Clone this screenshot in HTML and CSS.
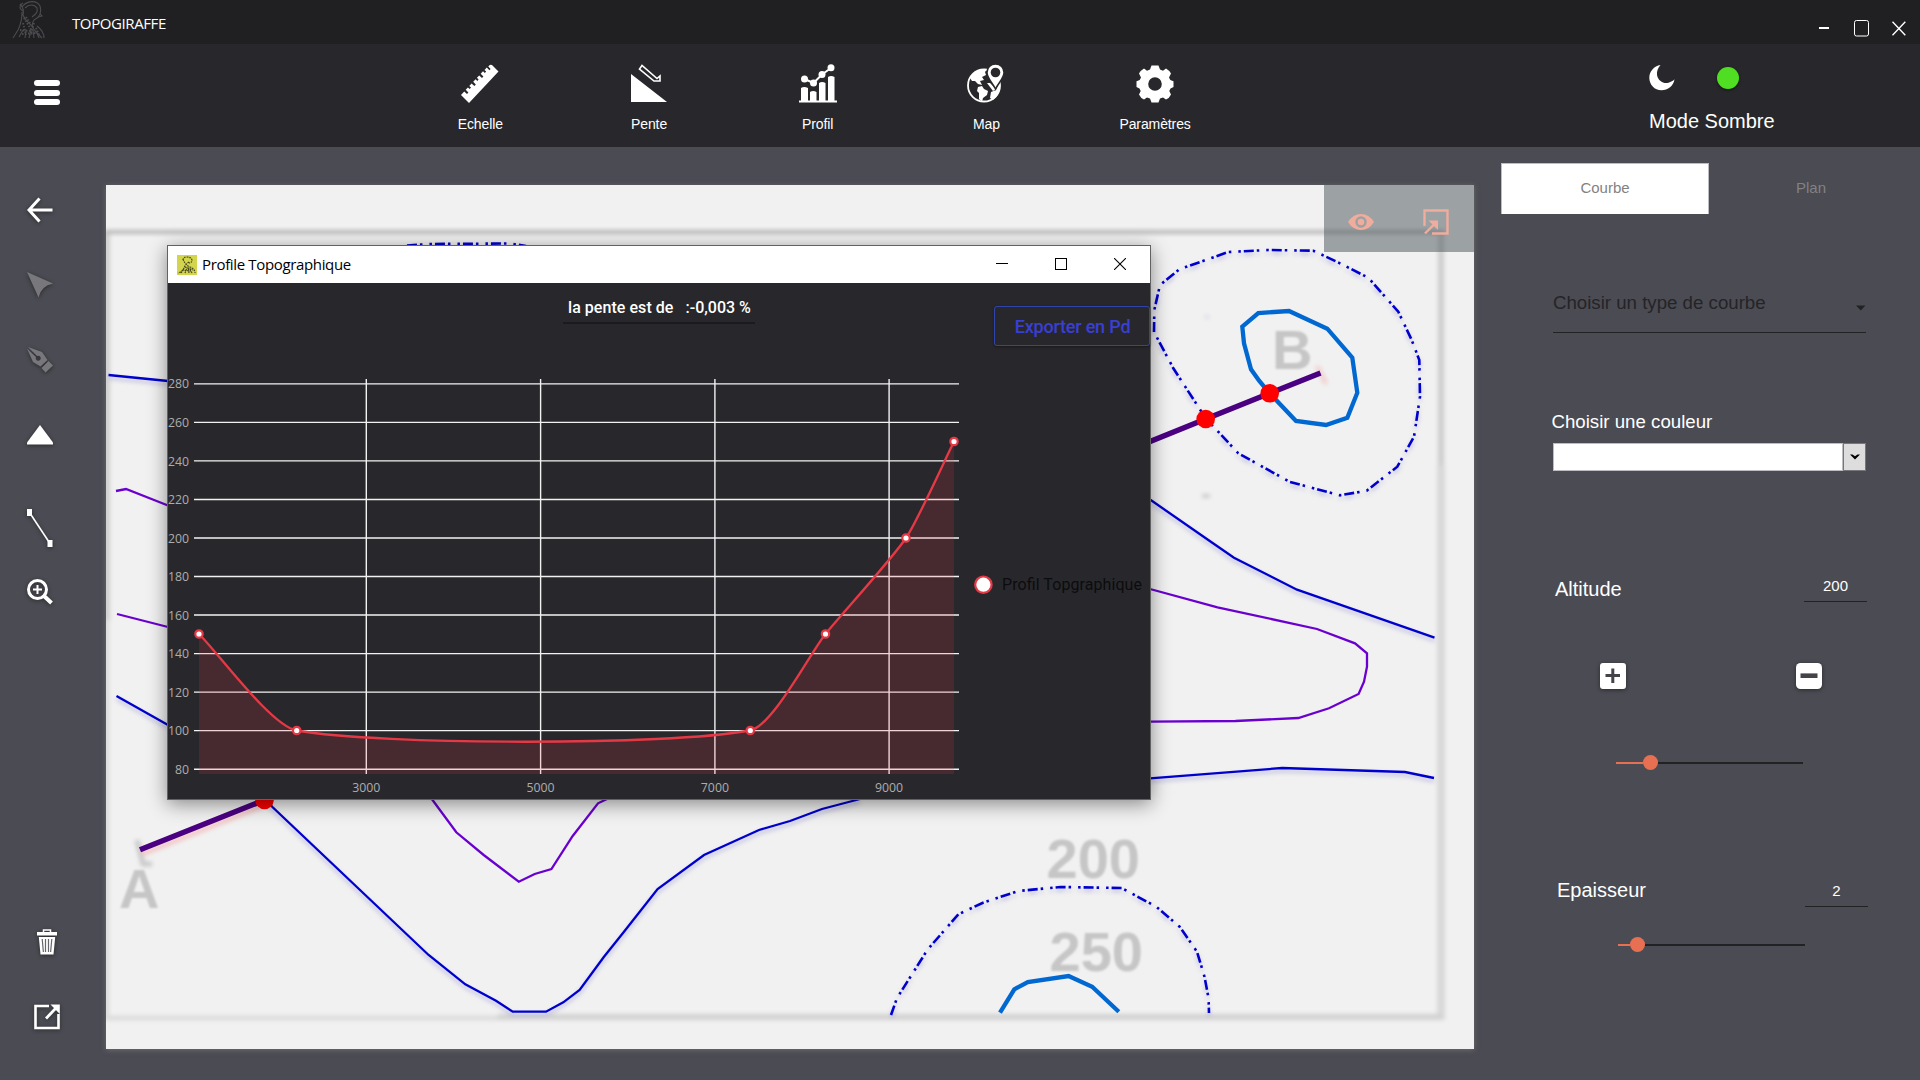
FILE: index.html
```html
<!DOCTYPE html>
<html lang="fr">
<head>
<meta charset="utf-8">
<title>TopoGiraffe</title>
<link rel="stylesheet" href="styles.css">
</head>
<body>
<header class="titlebar">
  <svg class="logo" width="34" height="40" viewBox="0 0 34 40"><g fill="none" stroke="#4c4c50" stroke-width="1.100"><path d="M11 11C7 9 7 5 11 3M10 7C15 0 25 0 28 6C30 12 28 17 22 20C19 24 20 29 25 33L30 38"/><path d="M13 8C17 4 22 4 25 8C26 12 24 14 20 17M28 14l2 2-4 1"/><path d="M8 4c3 3 4 7 3 11c2 7 8 8 10 13M10 12c0 8-1 12-4 18L1 38M25 26c4 3 7 7 7 12"/><path d="M7 37l4-7M13 38l1-8M17 38l2-8M22 38l-1-8M27 38l-3-7" /><path stroke-dasharray="1.5 1.5" d="M12 18l8 13M14 17l5 8M11 23l3 12M8 30l11 1M22 23l-4 12M24 28l3 7M10 34l15-1" stroke-width="2"/></g></svg>
  <span class="app-name">TOPOGIRAFFE</span>
  <div class="controls">
    <svg width="10" height="2"><path d="M0 1H10" stroke="#fff" stroke-width="2"/></svg>
    <svg width="16" height="17"><rect x=".5" y=".5" width="14" height="15.5" rx="2" fill="none" stroke="#fff"/></svg>
    <svg width="14" height="15"><path d="M.5 .8L13.3 14.2M13.3 .8L.5 14.2" stroke="#fff" stroke-width="1.4"/></svg>
  </div>
</header>

<nav class="toolbar">
  <button class="burger"><i></i><i></i><i></i></button>
  <div class="tools">
    <button class="tool"><svg width="40" height="40" viewBox="0 0 40 40"><path fill="#fff" d="M32 1L38.500 7.500L9 39L1 31L4.200 27.400L7 30L8.400 28.500L5.700 25.800L7.900 23.400L9.700 25.100L11 23.600L9.300 21.900L11.600 19.400L14.400 22L15.800 20.500L13.200 17.700L15.600 15.200L17.300 16.900L18.600 15.500L16.900 13.800L19.200 11.400L22 14L23.400 12.500L20.700 9.800L23 7.300L24.800 9L26.200 7.600L24.500 5.900L26.800 3.500L29.400 6.200L30.600 4.900L28.300 2.500L30 .8Z"/></svg><span>Echelle</span></button>
    <button class="tool"><svg width="40" height="40" viewBox="0 0 40 40"><path fill="#fff" d="M2 10V38H38Z"/><path fill="none" stroke="#fff" stroke-width="1.6" d="M13 1.500L10.500 5L25 17H31V12L28 14.500Z"/></svg><span>Pente</span></button>
    <button class="tool"><svg width="40" height="40" viewBox="0 0 40 40"><g fill="#fff"><path d="M1 36.500H39V38.500H1ZM3 24q3-2 7 0V37H3ZM12 28q3-2 6.500 0V37H12ZM21 19q3-2 6.500 0V37H21ZM30 13q3-2 6.500 0V37H30Z"/><circle cx="6.500" cy="15" r="3.500"/><circle cx="15.500" cy="19" r="3.500"/><circle cx="24" cy="10.500" r="3.500"/><circle cx="33" cy="3.800" r="3.500"/></g><path d="M6.500 15L15.500 19L24 10.500L33 4" fill="none" stroke="#fff" stroke-width="2"/></svg><span>Profil</span></button>
    <button class="tool"><svg width="40" height="40" viewBox="0 0 40 40"><circle cx="18" cy="21.500" r="16" fill="none" stroke="#fff" stroke-width="1.800"/><g fill="#fff"><path d="M4 14C8 7 14 4 21 5.500L19 8L20 11L16 13L18 16L14 17L16 21L12 20L9 17L6 17Z"/><path d="M12 23l4-1 2 3 4 2-1 4-4 3-1 4-3-3v-6l-2-2z"/><path d="M24 34l1-6 5-2 3-7 1 2q1 9-7 15z"/><path d="M21 19l3 0 6 6-3 2z"/></g><path fill="#fff" stroke="#28282c" stroke-width="1.500" d="M29.500 0C24.500 0 21 4 21 8.500C21 14 26 18 29.500 25C33 18 38 14 38 8.500C38 4 34.500 0 29.500 0Z"/><circle cx="29.500" cy="8.500" r="4.800" fill="#28282c"/></svg><span>Map</span></button>
    <button class="tool"><svg width="40" height="40" viewBox="0 0 40 40"><path fill="#fff" fill-rule="evenodd" d="M16.500 1.500H23.500L25 5.500L28 6.800L31 4.500Q34.500 6.500 36 9.500L34 13.500L35.300 16L38.500 17.200V23L35.500 24.500L34.300 27L36 30.500Q34.500 34 31 35.500L28 33.500L25 34.600L23.500 38.500H16.500L15 34.600L12 33.500L9 35.500Q5.500 34 4 30.500L5.700 27L4.500 24.500L1.500 23V17.200L4.700 16L6 13.500L4 9.500Q5.500 6.500 9 4.500L12 6.800L15 5.500ZM20 13.200A6.800 6.800 0 1 0 20 26.800A6.800 6.800 0 1 0 20 13.200Z"/></svg><span>Paramètres</span></button>
  </div>
  <div class="mode">
    <div class="mode-icons">
      <svg width="26" height="26" viewBox="0 0 26 26"><path fill="#fff" d="M11.500 0C9 3 7.500 6 8 10C9 15.500 14 19 19.500 17.800C22 17 24 16 25.500 14.300C24.500 21 19 25.300 12.500 25.300C5.500 25.300 .3 19.500 .3 12.700C.3 6.500 5 1 11.500 0Z"/></svg>
      <span class="mode-dot"></span>
    </div>
    <span class="mode-label">Mode Sombre</span>
  </div>
</nav>

<main class="workspace">
  <aside class="side">
    <svg class="ico" width="26" height="26" viewBox="0 0 26 26"><path d="M12.500 1.500L2 13L12.500 24.500M2 13H25.500" fill="none" stroke="#fff" stroke-width="3"/></svg>
    <svg class="ico off" width="26" height="26" viewBox="0 0 26 26"><path fill="#77777c" d="M0 0L26 11.500Q14 14 11.500 25.500Z"/></svg>
    <svg class="ico off" width="26" height="26" viewBox="0 0 26 26"><g fill="#77777c"><path fill-rule="evenodd" d="M1 0L15 5L20.500 13L13.500 19.500L6 15L0 1.500L9 10A2.500 2.500 0 1 0 10 9Z"/><path d="M21.500 14L26 18.500L18.500 25.500L14.500 21Z"/></g></svg>
    <svg class="ico" width="26" height="20" viewBox="0 0 26 20"><path fill="#fff" d="M13 0L26 17.500V19.500H0V17.500Z"/></svg>
    <svg class="ico" width="26" height="38" viewBox="0 0 26 38"><path d="M2.500 3.500L23 34.500" stroke="#fff" stroke-width="1.600"/><path fill="#fff" d="M0 0H5V7H0ZM20.500 31H25.500V38H20.500Z"/></svg>
    <svg class="ico" width="26" height="26" viewBox="0 0 26 26"><g fill="none" stroke="#fff"><circle cx="10.500" cy="10.500" r="9" stroke-width="3"/><path d="M6 10.500H15M10.500 6V15" stroke-width="2"/><path d="M17 17L24.500 24" stroke-width="4"/></g></svg>
    <svg class="ico" width="20" height="26" viewBox="0 0 20 26"><path fill="none" stroke="#fff" stroke-width="1.500" d="M6.500 3V1H13.500V3"/><path fill="#fff" d="M0 3H20V6.500H0ZM1.800 8H18.200L16.500 25.500H3.500Z"/><path stroke="#4b4b52" stroke-width="1.200" d="M5.200 10L6.400 23M8.500 10V23M11.500 10V23M14.800 10L13.600 23" opacity=".85"/></svg>
    <svg class="ico" width="26" height="26" viewBox="0 0 26 26"><path fill="none" stroke="#fff" stroke-width="2.600" d="M15 2H1.500V24H24.500V10"/><path stroke="#fff" stroke-width="2.800" d="M12 14.500L22 4"/><path fill="#fff" d="M16.500 .5H25.800V10Z"/></svg>
  </aside>

  <section class="canvas">
    <svg class="map" width="1368" height="864" viewBox="106 185 1368 864">
      <defs>
        <filter id="soft" x="-20%" y="-20%" width="140%" height="140%"><feGaussianBlur stdDeviation="1.300"/></filter>
        <filter id="halo" x="106" y="185" width="1368" height="864" filterUnits="userSpaceOnUse"><feGaussianBlur stdDeviation="2"/></filter>
      </defs>
      <g filter="url(#halo)" fill="none">
        <path d="M104 232H1445" stroke="#b8b8b8" stroke-width="4"/>
        <path d="M106 234V620" stroke="#cfcfcf" stroke-width="8"/>
        <path d="M106 620V1018" stroke="#dadada" stroke-width="6"/>
        <path d="M1441 232V465" stroke="#cccccc" stroke-width="6"/>
        <path d="M1441 465V1020" stroke="#d8d8d8" stroke-width="8"/>
        <path d="M104 1018H500" stroke="#dadada" stroke-width="4.500"/>
        <path d="M498 1017H1442" stroke="#d2d2d2" stroke-width="6"/>
        <path d="M137 840L143 864L152 864" stroke="#c8c8c8" stroke-width="5"/>
        <path d="M1317 366L1326 384" stroke="#f3d0d0" stroke-width="5"/>
        <path d="M142 854L262 806" stroke="#f3c6c6" stroke-width="5"/>
        <circle cx="1207" cy="317" r="1" stroke="#dcdcea" stroke-width="3"/>
        <path d="M1202 496H1210" stroke="#cccccc" stroke-width="4"/>
        <g stroke="#a9a9dc" stroke-width="3" transform="translate(0 3)" opacity=".65">
          <use href="#dashes"/><use href="#contours"/>
        </g>
      </g>
      <g class="ghost" filter="url(#soft)">
        <text x="1272" y="369">B</text>
        <text x="119" y="908">A</text>
        <text x="1046.500" y="878">200</text>
        <text x="1049.500" y="971">250</text>
      </g>
      <g id="dashes" fill="none" stroke-dasharray="10 3 2.500 7 2.500 3">
        <path d="M1154 332L1154.300 310L1160 285L1179.300 269.300L1228.300 252L1268.300 250L1313.300 250.700L1336.700 261.700L1368.300 277.700L1398.300 311.700L1411.700 340L1419.300 360L1420 396.700L1414 436.700L1397.300 466.700L1366.700 490.700L1340 495.300L1290 482L1238.300 453.300L1205.700 418.300L1173.300 368.300Z"/>
        <path d="M891 1015L897 998L927.800 949.300L958.400 914.300L983 902.700L1018.400 891L1060.400 887L1121.600 888L1156.300 906.700L1179.600 926.700L1197 951.700L1204.500 976.700L1208.600 998.300L1209 1013"/>
        <path d="M407 245.500L430 244L510 243.500L526 246"/>
      </g>
      <g id="contours" fill="none">
        <path d="M108.500 375L168 381M116.500 696L168 725M1150 499.500L1208.300 540L1234 557.700L1297 589.700L1434.500 637.700M1150 778.300L1282.200 768L1405 772L1434 778"/>
        <path d="M266 800L272.700 807.300L428.600 955L465.300 984.300L496 1000.700L512.700 1011.700H546L563.300 1002.300L579.600 990L604 956.700L623 933L657.600 889L704 855L759 830L790 821L822 809L860 799"/>
      </g>
      <use href="#dashes" stroke="#0000cd" stroke-width="2.600"/>
      <use href="#contours" stroke="#0000cd" stroke-width="2.300"/>
      <path fill="none" stroke="#6a00d0" stroke-width="2.300" d="M116 491L126 489L168 505.500M117 614L168 627M431.800 799L456.300 832.300L483.700 855L518.800 881.700L534.700 874L551.400 869L572.700 836L598 803.300L607 799M1150 589L1217.500 607.300L1317 629L1355 643.300L1367 653.300V666.700L1364 681.700L1358.600 694L1329 708.300L1298.300 718L1235.400 721L1150 721.700"/>
      <g fill="none" stroke="#0068d0" stroke-width="4.300">
        <path d="M1242.300 326.700L1258.300 313L1289 311L1327.300 328.700L1352.300 357.700L1357.300 392.700L1347.300 417.700L1326 425L1296 421L1269.700 393.300L1259.300 381L1251 369.300L1244 343.300Z"/>
        <path d="M1000 1012.700L1014.300 989.300L1027.800 982L1068.600 976L1092.200 986.700L1118.800 1011.700"/>
      </g>
      <path d="M140 849.700L264.500 800L1205.700 419L1269.700 393.300L1320.500 373" fill="none" stroke="#4b0082" stroke-width="5.500"/>
      <g fill="red"><circle cx="1269.700" cy="393.300" r="9.300"/><circle cx="1205.700" cy="419" r="9.300"/><circle cx="264.500" cy="800" r="9.300"/></g>
    </svg>

    <div class="canvas-tools">
      <svg width="26" height="16" viewBox="0 0 26 16"><path fill="#f0ac9d" fill-rule="evenodd" d="M0 8Q5 0 13 0T26 8Q21 16 13 16T0 8ZM13 2.300A5.700 5.700 0 1 0 13 13.700A5.700 5.700 0 1 0 13 2.300Z"/><circle cx="13" cy="8" r="3.300" fill="#f0ac9d"/></svg>
      <svg width="26" height="26" viewBox="0 0 26 26"><g fill="none" stroke="#f0ac9d"><path stroke-width="2.400" d="M1.500 17V1.500H24.500V24.500H9"/><path stroke-width="2.400" d="M2 24.500L12 14.500"/></g><path fill="#f0ac9d" d="M5.500 11.500H15V21Z"/></svg>
    </div>

    <div class="window">
      <div class="win-head">
        <svg width="20" height="20" viewBox="0 0 20 20"><path fill="#d3d64c" d="M0 0H20V20H0Z"/><path fill="none" stroke="#45461f" stroke-width="1.200" stroke-dasharray="1.700 .9" d="M6 5Q6 2 10 2T15 5Q15 8 12 8M6 4Q8 10 13 12T18 18M12 7Q8 10 7 13T1 18M4 18l3-4M8 18l2-5M12 18l-1-6M15 18l-3-5M8 12l8 3M5 15l9 1"/></svg>
        <span class="win-title">Profile Topographique</span>
        <div class="win-controls">
          <svg width="12" height="12"><path d="M0 5.500H12" stroke="#000"/></svg>
          <svg width="12" height="12"><rect x=".5" y=".5" width="11" height="11" fill="none" stroke="#000"/></svg>
          <svg width="12" height="12"><path d="M0 0L12 12M12 0L0 12" stroke="#000" stroke-width="1.100"/></svg>
        </div>
      </div>
      <div class="win-body">
        <div class="win-top">
          <div class="slope"><span class="slope-name">la pente est de</span><span>:-0,003 %</span></div>
          <button class="export">Exporter en Pd</button>
        </div>
        <svg class="chart" width="982" height="446" viewBox="168 353 982 446">
          <g stroke="#f2f2f2" stroke-width="1.400" fill="none">
            <path d="M194 383.900H959M194 422.400H959M194 460.900H959M194 499.500H959M194 538H959M194 576.500H959M194 615H959M194 653.600H959M194 692.100H959M194 730.600H959M194 769.200H959"/>
            <path d="M366.300 379V774M540.600 379V774M714.900 379V774M889.100 379V774"/>
          </g>
          <path fill="#e63946" fill-opacity=".16" d="M199 774V634C218.500 653.300 271.100 726 296.700 730.500C381.300 745.300 666.700 745.700 750 730.500C772.500 726.400 810.100 653 825.500 634C841.300 614.500 892.200 558.700 906 538C917.900 520.200 944.400 460.800 954 441.500V774Z"/>
          <path fill="none" stroke="#e63946" stroke-width="2.300" d="M199 634C218.500 653.300 271.100 726 296.700 730.500C381.300 745.300 666.700 745.700 750 730.500C772.500 726.400 810.100 653 825.500 634C841.300 614.500 892.200 558.700 906 538C917.900 520.200 944.400 460.800 954 441.500"/>
          <g fill="#fff" stroke="#e63946" stroke-width="2.200"><circle cx="199" cy="634" r="3.700"/><circle cx="296.700" cy="730.500" r="3.700"/><circle cx="750.300" cy="730.500" r="3.700"/><circle cx="825.500" cy="634" r="3.700"/><circle cx="906" cy="538" r="3.700"/><circle cx="954" cy="441.500" r="3.700"/><circle cx="983.400" cy="584.700" r="8.200"/></g>
          <g class="axis" text-anchor="end">
            <text x="189" y="388">280</text><text x="189" y="427">260</text><text x="189" y="466">240</text><text x="189" y="504">220</text><text x="189" y="543">200</text><text x="189" y="581">180</text><text x="189" y="620">160</text><text x="189" y="658">140</text><text x="189" y="697">120</text><text x="189" y="735">100</text><text x="189" y="774">80</text>
          </g>
          <g class="axis" text-anchor="middle">
            <text x="366.300" y="792">3000</text><text x="540.600" y="792">5000</text><text x="714.900" y="792">7000</text><text x="889.100" y="792">9000</text>
          </g>
          <text class="legend" x="1002" y="590" textLength="140">Profil Topgraphique</text>
        </svg>
      </div>
    </div>
  </section>

  <aside class="panel">
    <div class="tabs"><div class="tab active">Courbe</div><div class="tab plan">Plan</div></div>
    <div class="form">
      <div class="combo"><span>Choisir un type de courbe</span><svg width="10" height="6"><path d="M0 .5H9.500L4.800 5.500Z" fill="#222224"/></svg></div>
      <label class="color-label">Choisir une couleur</label>
      <div class="color-box"><span class="color-value"></span><span class="color-btn"><svg width="10" height="6"><path d="M0 .5H2.500L5 2.200L7.500 .5H10L5 5.500Z"/></svg></span></div>
      <div class="field altitude"><label>Altitude</label><span class="value">200</span></div>
      <div class="steps">
        <svg class="ico" width="26" height="26"><rect width="26" height="26" rx="3" fill="#fff"/><path d="M5.500 12.500H20M12.800 5.500V20" stroke="#444349" stroke-width="3"/></svg>
        <svg class="ico" width="26" height="26"><rect width="26" height="26" rx="4.500" fill="#fff"/><path d="M4.500 12.700H21.500" stroke="#444349" stroke-width="4.600"/></svg>
      </div>
      <div class="slider"><i class="fill wide"></i><i class="thumb"></i><i class="rest"></i></div>
      <div class="field thickness"><label>Epaisseur</label><span class="value">2</span></div>
      <div class="slider second"><i class="fill"></i><i class="thumb"></i><i class="rest"></i></div>
    </div>
  </aside>
</main>
</body>
</html>
```
FILE: styles.css
```css
* { box-sizing: border-box; }
body {
  margin: 0;
  width: 1920px;
  height: 1080px;
  overflow: hidden;
  background: #4b4b53;
  color: #fff;
  font-family: "Liberation Sans", Arial, sans-serif;
}
button { margin: 0; padding: 0; border: 0; background: none; color: inherit; font: inherit; }
svg { display: block; flex: none; }

.titlebar { display: flex; height: 44px; background: #202022; }
.logo { margin-left: 12px; }
.app-name {
  margin-left: 26px;
  font: 15px/46px "Open Sans", "Noto Sans", sans-serif;
  letter-spacing: -0.4px;
}
.controls {
  display: flex;
  align-items: center;
  gap: 25px;
  margin-left: auto;
  padding: 12px 14px 0 0;
}
.controls svg:last-child { margin-left: -3px; }

.toolbar {
  display: grid;
  grid-template-columns: 396px 844px 1fr;
  height: 103px;
  background: #28282c;
}
.burger {
  display: flex;
  flex-direction: column;
  gap: 3.500px;
  width: 26px;
  margin: 36px 0 0 34px;
}
.burger i { display: block; height: 6px; border-radius: 3px; background: #fff; }
.tools { display: grid; grid-template-columns: repeat(5, 168.7px); }
.tool {
  display: flex;
  flex-direction: column;
  align-items: center;
  padding-top: 20px;
  font-size: 14px;
}
.tool span { margin-top: 11px; line-height: 18px; letter-spacing: -0.1px; }
.mode { padding: 21px 0 0 409px; }
.mode-icons { display: flex; gap: 42px; align-items: center; height: 26px; }
.mode-dot { width: 22px; height: 22px; border-radius: 50%; background: #50de22; box-shadow: 0 1px 3px #0008; }
.mode-label { display: block; margin-top: 18px; font-size: 20px; line-height: 24px; }

.workspace { display: grid; grid-template-columns: 106px 1368px 1fr; height: 933px; }
.ico { filter: drop-shadow(0 1px 2px #0007); }
.side { display: flex; flex-direction: column; padding-left: 27px; }
.side .ico:nth-child(1) { margin-top: 50px; }
.side .ico:nth-child(2) { margin-top: 49px; }
.side .ico:nth-child(3) { margin-top: 49px; }
.side .ico:nth-child(4) { margin-top: 52px; }
.side .ico:nth-child(5) { margin-top: 64px; }
.side .ico:nth-child(6) { margin-top: 32px; }
.side .ico:nth-child(7) { margin: 324px 0 0 10px; }
.side .ico:nth-child(8) { margin: 49px 0 0 7px; }

.canvas {
  position: relative;
  height: 864px;
  margin-top: 38px;
  background: #f1f1f1;
  box-shadow: 0 1px 5px #8a8a8a88;
}
.ghost { fill: #c6c6c6; font: bold 56px "Liberation Sans", Arial, sans-serif; }
.canvas-tools {
  position: absolute;
  top: 0;
  right: 0;
  display: flex;
  align-items: center;
  gap: 49px;
  width: 150px;
  height: 67px;
  padding: 6px 0 0 24px;
  background: rgba(72, 82, 86, 0.5);
}

.window {
  position: absolute;
  left: 61px;
  top: 60px;
  width: 984px;
  height: 555px;
  border: 1px solid #626262;
  background: #28282c;
  box-shadow: 0 4px 18px #00000070;
}
.win-head {
  display: flex;
  align-items: center;
  height: 37px;
  padding: 0 24px 0 9px;
  background: #fff;
  color: #000;
}
.win-title {
  margin: -1px 0 1px 5px;
  font: 15px/20px "Open Sans", "Noto Sans", sans-serif;
  letter-spacing: -0.35px;
}
.win-controls { display: flex; gap: 47px; margin-left: auto; }
.win-controls svg { margin-top: -1px; }
.win-top { display: flex; height: 70px; font-family: Roboto, sans-serif; font-weight: 500; }
.slope {
  display: flex;
  gap: 12px;
  width: 192px;
  height: 41px;
  margin-left: 395px;
  padding: 15px 0 0 5px;
  border-bottom: 2px solid #1b1b1e;
  font-size: 16px;
  line-height: 20px;
  white-space: nowrap;
}
.slope-name { letter-spacing: 0.05px; }
.export {
  width: 156px;
  height: 40px;
  margin: 23px 0 0 auto;
  padding-left: 1px;
  border: 1px solid #2f44ad;
  border-radius: 3px;
  box-shadow: 0 1px 3px #0006;
  color: #3a3fd4;
  font-size: 18px;
  letter-spacing: -0.2px;
}
.axis { fill: #adadad; font: 12.3px "Open Sans", "Noto Sans", sans-serif; }
.legend { fill: #0c0c0e; font: 16px Roboto, sans-serif; }

.panel { padding: 16px 0 0 27px; }
.tabs { display: flex; }
.tab { width: 208px; height: 51px; line-height: 49px; text-align: center; font-size: 15px; color: #828282; }
.tab.active { border: solid #bdbdbf; border-width: 1px 1px 0; background: #fff; line-height: 48px; }
.tab.plan { width: 204px; }
.form { width: 313px; margin-left: 52px; }
.combo {
  display: flex;
  justify-content: space-between;
  align-items: center;
  height: 48px;
  margin-top: 71px;
  padding-bottom: 12px;
  border-bottom: 1px solid #222224;
  color: #242427;
  font-size: 18.67px;
}
.combo svg { margin-top: 11px; }
.color-label { display: block; margin: 77px 0 0 -1.500px; font-size: 18.67px; line-height: 24px; }
.color-box { display: flex; height: 28px; margin-top: 9px; }
.color-value { flex: 1; border: 1px solid #bdbdc1; background: #fff; }
.color-btn { display: flex; align-items: center; justify-content: center; width: 23px; border: 1px solid #77777b; background: #ddd; }
.field { display: flex; justify-content: space-between; font-size: 20px; line-height: 24px; }
.field label { margin-left: 2px; }
.value { width: 63px; border-bottom: 1px solid #222224; text-align: center; font-size: 15px; }
.altitude { height: 28px; margin: 103px -1px 0 0; }
.altitude label { margin-top: 3px; }
.steps { display: flex; justify-content: space-between; margin: 61px 44px 0 47px; }
.slider { display: flex; align-items: center; width: 187px; height: 15px; margin: 66px 0 0 63px; }
.slider .fill { width: 12px; height: 2px; background: #e87052; }
.slider .fill.wide { width: 27px; }
.slider .thumb { width: 15px; height: 15px; border-radius: 50%; background: #e87052; }
.slider .rest { flex: 1; height: 2px; background: #222224; }
.thickness { height: 29px; margin: 108px -2px 0 2px; }
.thickness .value { height: 28px; margin-top: 1px; }
.slider.second { margin: 30px 0 0 65px; }
```
